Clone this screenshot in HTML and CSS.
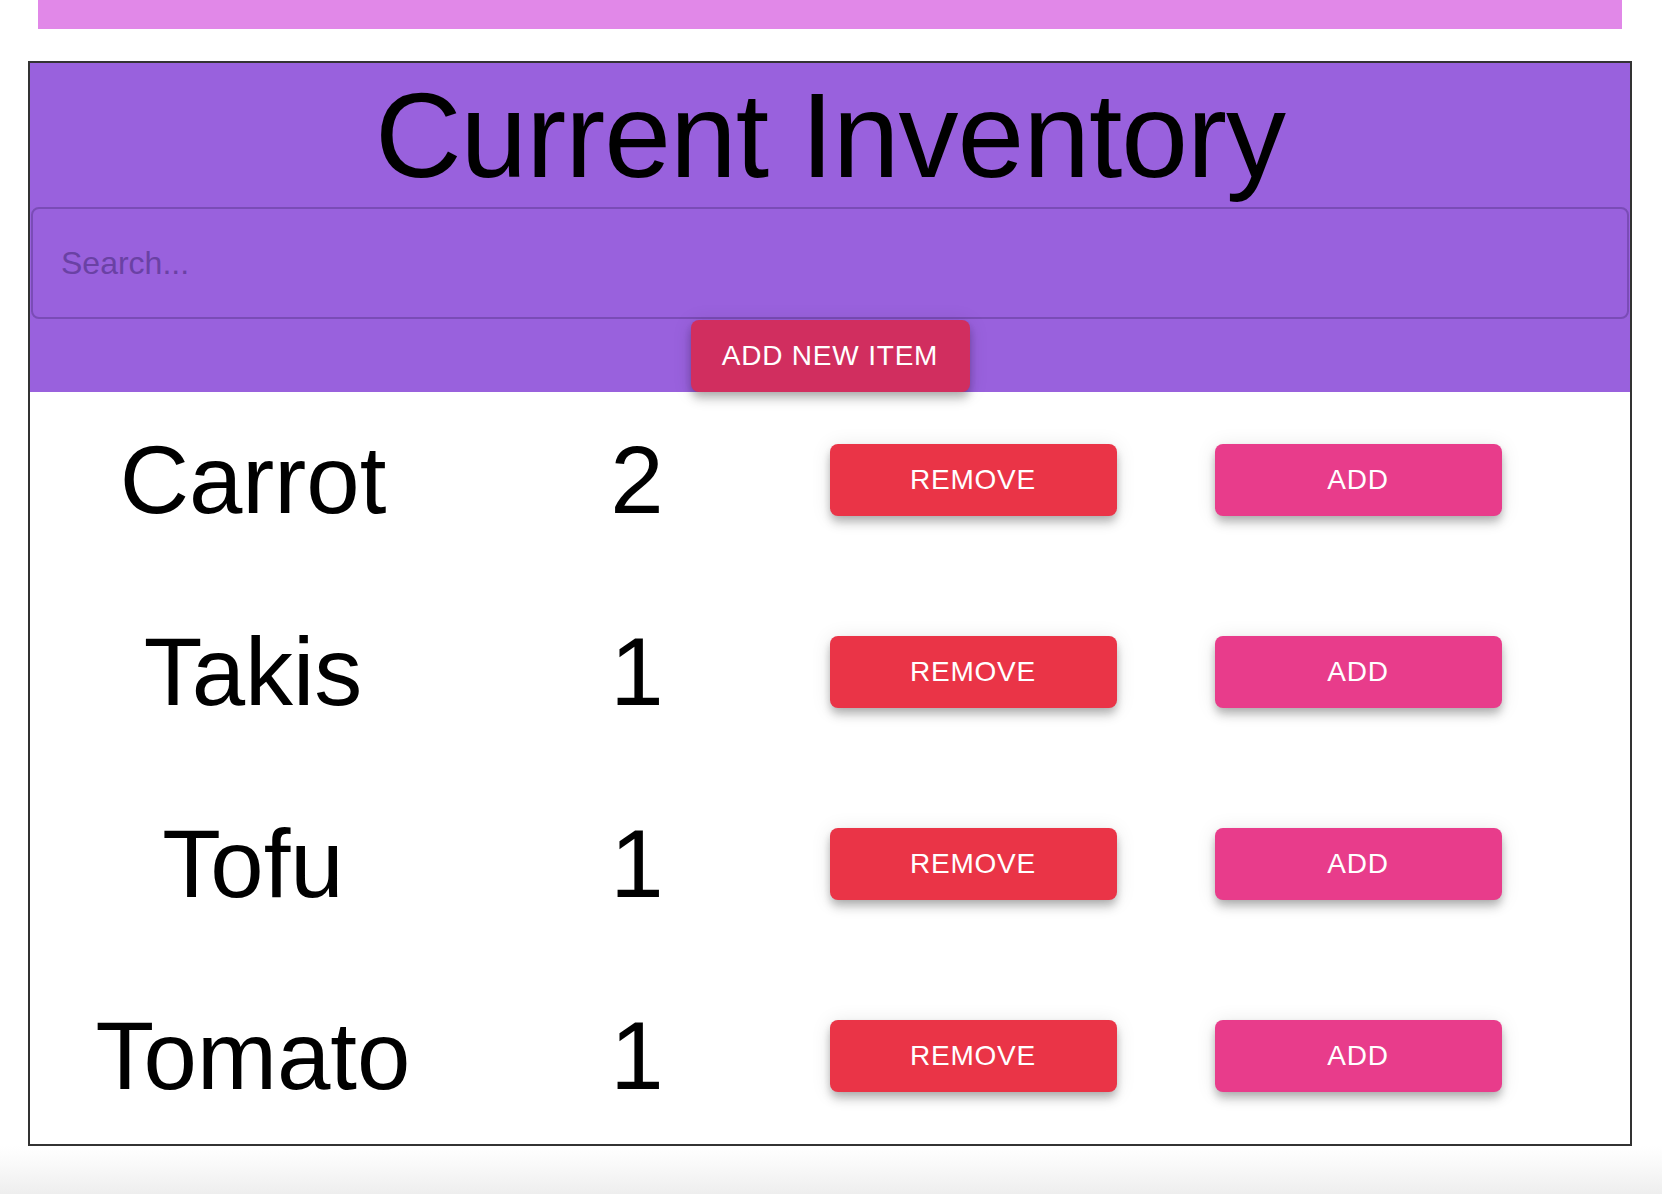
FILE: index.html
```html
<!DOCTYPE html>
<html lang="en">
<head>
<meta charset="utf-8">
<title>Current Inventory</title>
<link rel="stylesheet" href="styles.css">
</head>
<body>
  <div class="topbar"></div>
  <main class="inventory">
    <header class="inv-header">
      <h1 class="inv-title">Current Inventory</h1>
      <div class="search">
        <input class="search-input" type="text" placeholder="Search...">
      </div>
      <button class="btn btn-new">Add New Item</button>
    </header>
    <section class="inv-list">
      <div class="inv-row">
        <span class="item-name">Carrot</span>
        <span class="item-qty">2</span>
        <button class="btn btn-remove">Remove</button>
        <button class="btn btn-add">Add</button>
      </div>
      <div class="inv-row">
        <span class="item-name">Takis</span>
        <span class="item-qty">1</span>
        <button class="btn btn-remove">Remove</button>
        <button class="btn btn-add">Add</button>
      </div>
      <div class="inv-row">
        <span class="item-name">Tofu</span>
        <span class="item-qty">1</span>
        <button class="btn btn-remove">Remove</button>
        <button class="btn btn-add">Add</button>
      </div>
      <div class="inv-row">
        <span class="item-name">Tomato</span>
        <span class="item-qty">1</span>
        <button class="btn btn-remove">Remove</button>
        <button class="btn btn-add">Add</button>
      </div>
    </section>
  </main>
  <div class="window-foot"></div>
</body>
</html>
```
FILE: styles.css
```css
* { box-sizing: border-box; }

html, body {
  margin: 0;
  padding: 0;
  background: #ffffff;
  font-family: "Liberation Sans", Arial, Helvetica, sans-serif;
  color: #000;
}

body {
  width: 1662px;
  height: 1194px;
  overflow: hidden;
  display: flex;
  flex-direction: column;
}

.topbar {
  margin: 0 40px 0 38px;
  height: 29px;
  background: #e188e8;
  flex: none;
}

.inventory {
  margin: 32px 30px 0 28px;
  width: 1604px;
  border: 2px solid #333333;
  flex: none;
}

.inv-header {
  background: #9961dd;
  display: flex;
  flex-direction: column;
  align-items: center;
}

.inv-title {
  margin: 0;
  font-size: 120px;
  line-height: 144px;
  font-weight: 300;
  letter-spacing: -1px;
  text-align: center;
  width: 100%;
}

.search {
  width: 100%;
  padding: 0 1px;
}

.search-input {
  display: block;
  width: 100%;
  height: 112px;
  margin: 0;
  padding: 0 28px;
  border: 2px solid #7a4cb6;
  border-radius: 8px;
  background: transparent;
  font-family: "Liberation Sans", Arial, Helvetica, sans-serif;
  font-size: 32px;
  color: #000;
  outline: none;
}

.search-input::placeholder {
  color: #6a41a4;
  opacity: 1;
}

.btn {
  font-family: "Liberation Sans", Arial, Helvetica, sans-serif;
  font-size: 28px;
  font-weight: 500;
  letter-spacing: 0.8px;
  text-transform: uppercase;
  white-space: nowrap;
  color: #ffffff;
  border: none;
  border-radius: 8px;
  height: 72px;
  padding: 0;
  cursor: pointer;
  box-shadow: 0 4px 8px -2px rgba(0,0,0,0.2), 0 8px 10px 0 rgba(0,0,0,0.14), 0 2px 20px 0 rgba(0,0,0,0.10);
}

.btn-new {
  background: #d12e5f;
  width: 279px;
  margin-top: 1px;
}

.inv-list {
  display: flex;
  flex-direction: column;
  gap: 16px;
}

.inv-row {
  height: 176px;
  display: grid;
  grid-template-columns: 446px 322px 350px 420px;
  align-items: center;
  justify-items: center;
}

.item-name,
.item-qty {
  font-size: 96px;
  line-height: 112px;
  font-weight: 400;
}

.btn-remove {
  background: #ea3447;
  width: 287px;
}

.btn-add {
  background: #e83c8b;
  width: 287px;
}

.window-foot {
  flex: 1;
  background: linear-gradient(to bottom, #ffffff 0%, #f9f9f9 40%, #eeeeee 100%);
}
```
